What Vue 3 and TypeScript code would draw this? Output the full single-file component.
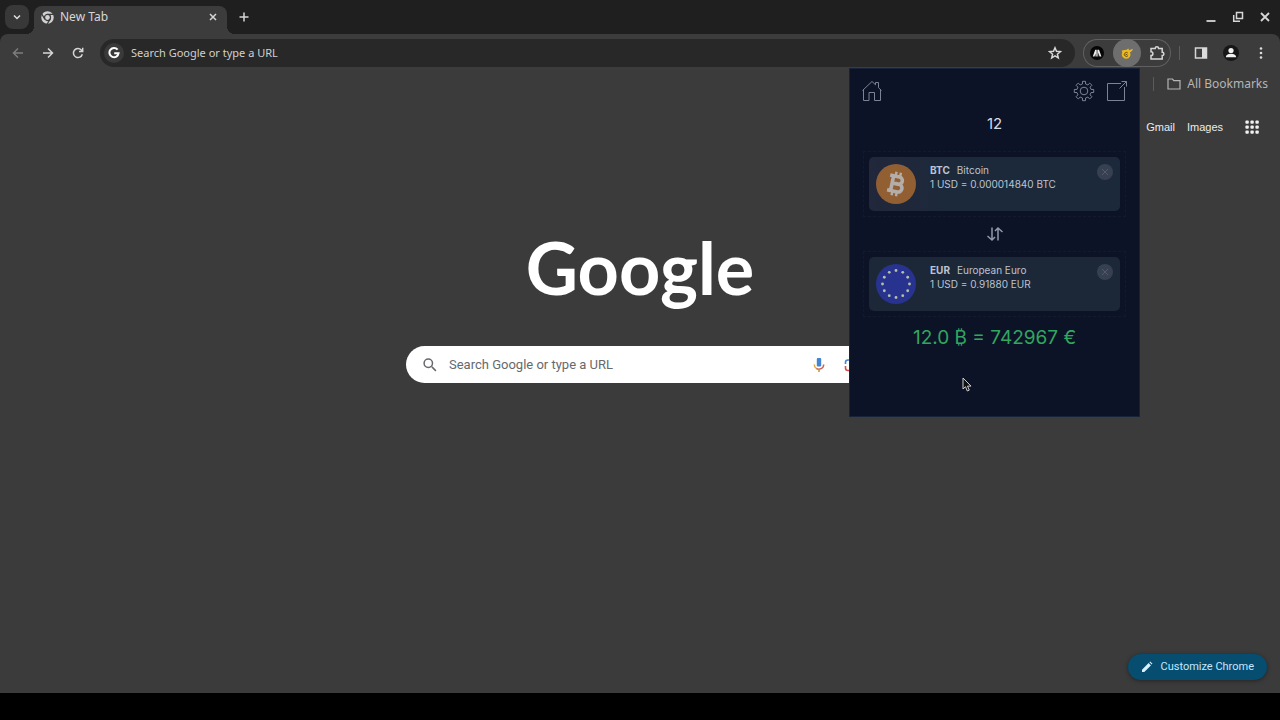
<script setup lang="ts">
import { ref } from 'vue'

interface Currency {
  code: string
  name: string
  rate: string
}

const amount = ref('12')
const address = ref('')
const query = ref('')

const source: Currency = { code: 'BTC', name: 'Bitcoin', rate: '1 USD = 0.000014840 BTC' }
const target: Currency = { code: 'EUR', name: 'European Euro', rate: '1 USD = 0.91880 EUR' }

function polar(radius: number, angle: number, centre: number): string {
  return `${(centre + radius * Math.cos(angle)).toFixed(2)} ${(centre + radius * Math.sin(angle)).toFixed(2)}`
}

function gearOutline(teeth: number): string {
  const step = (Math.PI * 2) / teeth
  const points: string[] = []
  for (let i = 0; i < teeth; i++) {
    const a = i * step - Math.PI / 2
    points.push(polar(7.2, a - step * 0.28, 11), polar(9.8, a - step * 0.2, 11))
    points.push(polar(9.8, a + step * 0.2, 11), polar(7.2, a + step * 0.28, 11))
  }
  return `M${points.join('L')}Z`
}

const gear = gearOutline(8)
const stars = Array.from({ length: 12 }, (_, i) => {
  const a = (i * Math.PI) / 6
  return { x: 20 + 13.5 * Math.cos(a), y: 20 + 13.5 * Math.sin(a) }
})
const dots = [3, 8, 13]
</script>

<template>
  <div class="browser">
    <header class="tabstrip">
      <button class="tab-search" aria-label="Search tabs">
        <svg width="10" height="10" viewBox="0 0 10 10"><path d="M2 3.5l3 3 3-3" class="line bold" /></svg>
      </button>
      <div class="tab">
        <svg width="13" height="13" viewBox="0 0 24 24">
          <circle cx="12" cy="12" r="11.5" fill="#d2d2d2" />
          <circle cx="12" cy="12" r="5.6" fill="none" stroke="#3c3c3c" stroke-width="2.4" />
          <path d="M12 6.2h11M7 15L1.6 5.8M17 15l-5.6 9" stroke="#3c3c3c" stroke-width="2.2" />
        </svg>
        <span class="tab-title">New Tab</span>
        <button class="plain close-tab" aria-label="Close tab">
          <svg width="8" height="8" viewBox="0 0 8 8"><path d="M1 1l6 6M7 1L1 7" class="line bold" /></svg>
        </button>
      </div>
      <button class="plain new-tab" aria-label="New tab">
        <svg width="10" height="10" viewBox="0 0 10 10"><path d="M5 0.5v9M0.5 5h9" class="line bold" /></svg>
      </button>
      <div class="window-controls">
        <button class="plain" aria-label="Minimize">
          <svg width="12" height="12" viewBox="0 0 12 12"><path d="M1.5 10h9" class="line heavy" /></svg>
        </button>
        <button class="plain" aria-label="Restore">
          <svg width="12" height="12" viewBox="0 0 12 12"><path d="M4.5 1.5h6v6h-6zM1.7 4v6.3H8" class="line bold" /></svg>
        </button>
        <button class="plain" aria-label="Close window">
          <svg width="12" height="12" viewBox="0 0 12 12"><path d="M2 2l8 8M10 2l-8 8" class="line heavy" /></svg>
        </button>
      </div>
    </header>

    <nav class="toolbar">
      <div class="nav-buttons">
        <button class="plain dim" aria-label="Back">
          <svg width="12" height="12" viewBox="0 0 12 12"><path d="M11 6H1.5M6 1.5L1.5 6 6 10.5" class="line bold" /></svg>
        </button>
        <button class="plain" aria-label="Forward">
          <svg width="12" height="12" viewBox="0 0 12 12"><path d="M1 6h9.500M6 1.5L10.500 6 6 10.5" class="line bold" /></svg>
        </button>
        <button class="plain" aria-label="Reload">
          <svg width="12" height="12" viewBox="0 0 12 12"><path d="M10.300 7.200A4.500 4.500 0 1 1 9.300 3L10.600 4.400M10.700 0.800v3.800H7" class="line bold" /></svg>
        </button>
      </div>
      <div class="omnibox">
        <span class="engine">
          <svg width="12" height="12" viewBox="0 0 12 12"><path d="M9.600 2.700A4.600 4.600 0 1 0 10.600 6.200H6.200" fill="none" stroke="#fff" stroke-width="2" /></svg>
        </span>
        <input v-model="address" aria-label="Address and search bar" placeholder="Search Google or type a URL" />
        <button class="plain" aria-label="Bookmark this tab">
          <svg width="14" height="14" viewBox="0 0 14 14"><path d="M7 1.800l1.500 3.500 3.800.4-2.900 2.500.9 3.700L7 9.900l-3.300 2 .9-3.700-2.900-2.500 3.800-.4z" class="line bold" /></svg>
        </button>
      </div>
      <div class="extensions">
        <button class="plain" aria-label="Dark extension">
          <svg width="14" height="14" viewBox="0 0 14 14">
            <circle cx="7" cy="7" r="7" fill="#050505" />
            <path d="M2.800 10.500L5.200 3.800h1.500v6.700H5.500V7.600l-1 2.900zM7.400 3.800H9l2.400 6.700H9.600L8.200 6.500v4h-.8z" fill="#eee" />
          </svg>
        </button>
        <button class="plain active" aria-label="Currency converter">
          <svg width="14" height="14" viewBox="0 0 14 14">
            <path d="M1.800 4.500l4.600-.8 2.100-1.200.5 1.700L13 2.800l-1 2.300-2.100 1.300a4.300 4.300 0 1 1-7.600.2z" fill="#ecb91f" />
            <path d="M7.800 7a2 2 0 1 0 .3 2.500M5.700 8.500h1.500" fill="none" stroke="#6b4d10" stroke-width="1" />
          </svg>
        </button>
        <button class="plain" aria-label="Extensions">
          <svg width="16" height="16" viewBox="0 0 16 16"><path d="M2 3.500h4.200a1.700 1.700 0 0 1 3.400 0h3.600v3.700a1.700 1.700 0 0 1 0 3.400v3.400H2v-3.400a1.900 1.900 0 0 0 0-3.800z" class="line bold" /></svg>
        </button>
      </div>
      <span class="divider"></span>
      <div class="nav-buttons">
        <button class="plain" aria-label="Side panel">
          <svg width="14" height="14" viewBox="0 0 14 14">
            <rect x="1.500" y="2" width="11" height="10" class="line bold" />
            <path d="M8 2h4.500v10H8z" fill="#dcdcdc" />
          </svg>
        </button>
        <button class="plain" aria-label="Profile">
          <svg width="16" height="16" viewBox="0 0 16 16">
            <circle cx="8" cy="8" r="8" fill="#171717" />
            <circle cx="8" cy="5.500" r="2.600" fill="#f2f2f2" />
            <path d="M2.800 12.300c0-2.300 2-3.500 5.200-3.500s5.200 1.200 5.200 3.500z" fill="#f2f2f2" />
          </svg>
        </button>
        <button class="plain" aria-label="Menu">
          <svg width="14" height="14" viewBox="0 0 14 14" fill="#dcdcdc">
            <circle cx="7" cy="2.500" r="1.300" /><circle cx="7" cy="7" r="1.300" /><circle cx="7" cy="11.500" r="1.300" />
          </svg>
        </button>
      </div>
    </nav>

    <main class="page">
      <div class="bookmarks">
        <span class="bookmark-divider"></span>
        <button class="plain bookmark-folder">
          <svg width="14" height="12" viewBox="0 0 14 12"><path d="M1 1h4.500l1.300 1.600H13V11H1z" class="line" /></svg>
          All Bookmarks
        </button>
      </div>
      <div class="account">
        <a href="#gmail">Gmail</a>
        <a href="#images">Images</a>
        <button class="plain" aria-label="Google apps">
          <svg width="16" height="16" viewBox="0 0 16 16" fill="#f1f1f1">
            <template v-for="y in dots" :key="y">
              <rect v-for="x in dots" :key="x" :x="x - 1.600" :y="y - 1.600" width="3.400" height="3.400" rx="1" />
            </template>
          </svg>
        </button>
      </div>

      <h1 class="wordmark">Google</h1>

      <form class="search" @submit.prevent>
        <svg width="14" height="14" viewBox="0 0 14 14"><path d="M8.900 8.900l4 4M9.500 5.300a4.200 4.200 0 1 1-8.400 0 4.200 4.200 0 0 1 8.400 0z" fill="none" stroke="#66696d" stroke-width="1.500" /></svg>
        <input v-model="query" aria-label="Search" placeholder="Search Google or type a URL" />
        <button type="button" class="plain" aria-label="Search by voice">
          <svg width="12" height="16" viewBox="0 0 12 16">
            <rect x="3.800" y="1" width="4.400" height="8.500" rx="1" fill="#4285d4" />
            <path d="M1.300 7.500c0 2.200 1 3.500 2.300 4.200" fill="none" stroke="#e0a83c" stroke-width="1.500" />
            <path d="M3.400 11.500c2.600 1.500 7.300.3 7.300-4" fill="none" stroke="#d2604f" stroke-width="1.500" />
            <path d="M6 12v3" stroke="#b9a23f" stroke-width="1.600" />
          </svg>
        </button>
        <button type="button" class="plain" aria-label="Search by image">
          <svg width="14" height="14" viewBox="0 0 14 14" fill="none" stroke-width="1.600">
            <path d="M1.500 6V4.500a2.500 2.500 0 0 1 2.500-2.500h2" stroke="#4285d4" />
            <path d="M1.500 8v2a2.500 2.500 0 0 0 2.500 2.500h2" stroke="#d2504f" />
            <path d="M8 2h2a2.500 2.500 0 0 1 2.500 2.500V6" stroke="#34a853" />
            <circle cx="7.500" cy="7.300" r="2" fill="#4285f4" stroke="none" />
          </svg>
        </button>
      </form>

      <button class="customize">
        <svg width="12" height="12" viewBox="0 0 12 12" fill="#d8efff"><path d="M1 8.700L7.600 2.100l2.300 2.300L3.300 11H1zM8.400 1.300l.8-.8 2.300 2.300-.8.8z" /></svg>
        Customize Chrome
      </button>
    </main>

    <footer class="desktop"></footer>

    <section class="popup" aria-label="Currency converter">
      <div class="popup-bar">
        <button class="plain" aria-label="Home">
          <svg width="22" height="22" viewBox="0 0 22 22" class="thin">
            <path d="M1.500 10.500L11 1.500l3.500 3.300V2.500h3v5.200l3 2.800M2.500 9.500v11h5.500v-8h5.500v8h6v-11" />
          </svg>
        </button>
        <span class="grow"></span>
        <button class="plain" aria-label="Settings">
          <svg width="22" height="22" viewBox="0 0 22 22" class="thin"><path :d="gear" /><circle cx="11" cy="11" r="3.800" /></svg>
        </button>
        <button class="plain" aria-label="Open in window">
          <svg width="22" height="22" viewBox="0 0 22 22" class="thin"><path d="M15 3.500H1.500v17h17V7M13.500 8.500l7-7M15.500 1.500h5v5" /></svg>
        </button>
      </div>
      <input v-model="amount" class="amount" aria-label="Amount" />
      <div class="slot">
        <article class="card from">
          <svg class="coin" width="40" height="40" viewBox="0 0 40 40">
            <circle cx="20" cy="20" r="20" fill="#925f33" />
            <g transform="rotate(12 20 20)" fill="none" stroke="#b3aeaa" stroke-width="3.600">
              <path d="M12.500 12.500H22a3.600 3.600 0 0 1 0 7.200h-6M16 12.500v15M12.500 27.500h10.400a3.900 3.900 0 0 0 0-7.800H20" />
              <path d="M18 8v4M22.500 8v4M18 28v4M22.500 28v4" stroke-width="2.400" />
            </g>
          </svg>
          <div class="details">
            <p><b>{{ source.code }}</b><span>{{ source.name }}</span></p>
            <p>{{ source.rate }}</p>
          </div>
          <button class="remove" aria-label="Remove Bitcoin">
            <svg width="8" height="8" viewBox="0 0 8 8"><path d="M1 1l6 6M7 1L1 7" /></svg>
          </button>
        </article>
      </div>
      <button class="plain swap" aria-label="Swap currencies">
        <svg width="18" height="16" viewBox="0 0 18 16"><path d="M6 1.500v12M1.500 10L6 14l3-3M12 14.500v-12M9 5l3-3 4.500 4" /></svg>
      </button>
      <div class="slot">
        <article class="card to">
          <svg class="coin" width="40" height="40" viewBox="0 0 40 40">
            <circle cx="20" cy="20" r="20" fill="#28338f" />
            <circle v-for="(s, i) in stars" :key="i" :cx="s.x" :cy="s.y" r="1.400" fill="#b9bfa6" />
          </svg>
          <div class="details">
            <p><b>{{ target.code }}</b><span>{{ target.name }}</span></p>
            <p>{{ target.rate }}</p>
          </div>
          <button class="remove" aria-label="Remove European Euro">
            <svg width="8" height="8" viewBox="0 0 8 8"><path d="M1 1l6 6M7 1L1 7" /></svg>
          </button>
        </article>
      </div>
      <output class="result">12.0 ₿ = 742967 €</output>
      <svg class="pointer" width="10" height="15" viewBox="0 0 10 15"><path d="M1 1v11l2.500-2.300L5.300 14l2-.9-1.800-4H9z" fill="#111" stroke="#d0d0d0" /></svg>
    </section>
  </div>
</template>

<style>
body {
  background: #000;
}
</style>

<style scoped>
.browser {
  position: relative;
  display: flex;
  flex-direction: column;
  min-height: 100vh;
  background: #1f1f1f;
  color: #d6d6d6;
  font: 12px/16px "Noto Sans", "Open Sans", sans-serif;
}
svg {
  display: block;
  flex: none;
}
.line {
  fill: none;
  stroke: currentColor;
  stroke-width: 1.2;
}
.bold {
  stroke-width: 1.5;
}
.heavy {
  stroke-width: 1.8;
}
.plain {
  display: flex;
  align-items: center;
  justify-content: center;
  padding: 0;
  border: 0;
  background: none;
  color: inherit;
  font: inherit;
}
input {
  min-width: 0;
  padding: 0;
  border: 0;
  outline: 0;
  background: none;
  color: inherit;
  font: inherit;
}
.tabstrip {
  display: flex;
  align-items: center;
  height: 34px;
}
.tab-search {
  display: flex;
  align-items: center;
  justify-content: center;
  width: 24px;
  height: 24px;
  margin: 0 5px;
  padding: 0;
  border: 0;
  border-radius: 8px;
  background: #383838;
  color: #dedede;
}
.tab {
  position: relative;
  display: flex;
  align-items: center;
  gap: 6px;
  box-sizing: border-box;
  width: 193px;
  height: 28px;
  margin-top: 6px;
  padding: 0 6px 6px 7px;
  border-radius: 8px 8px 0 0;
  background: #3c3c3c;
}
.tab::before,
.tab::after {
  content: "";
  position: absolute;
  bottom: 0;
  width: 8px;
  height: 8px;
}
.tab::before {
  right: 100%;
  background: radial-gradient(circle at 0 0, transparent 8px, #3c3c3c 8px);
}
.tab::after {
  left: 100%;
  background: radial-gradient(circle at 100% 0, transparent 8px, #3c3c3c 8px);
}
.tab-title {
  flex: 1;
}
.close-tab {
  width: 16px;
  height: 16px;
}
.new-tab {
  width: 24px;
  height: 24px;
  margin-left: 5px;
}
.window-controls {
  display: flex;
  gap: 3px;
  margin: 0 3px 0 auto;
}
.window-controls button {
  width: 24px;
  height: 24px;
}
.toolbar {
  display: flex;
  align-items: center;
  height: 34px;
  padding: 2px 6px 0 5px;
  border-radius: 8px 8px 0 0;
  background: #3c3c3c;
}
.nav-buttons {
  display: flex;
  gap: 4px;
}
.nav-buttons button {
  width: 26px;
  height: 26px;
}
.nav-buttons .dim {
  color: #7d7d7d;
}
.omnibox {
  display: flex;
  flex: 1;
  align-items: center;
  height: 28px;
  margin: 0 8px 0 9px;
  padding: 0 13px 0 4px;
  border-radius: 14px;
  background: #282828;
}
.omnibox input {
  flex: 1;
  font-size: 11px;
}
.omnibox input::placeholder {
  color: #d0d0d0;
  opacity: 1;
}
.engine {
  display: flex;
  align-items: center;
  justify-content: center;
  width: 20px;
  height: 20px;
  margin-right: 7px;
  border-radius: 10px;
  background: #3a3a3a;
}
.extensions {
  display: flex;
  gap: 2px;
  border-radius: 14px;
  box-shadow: inset 0 0 0 1px #606060;
}
.extensions button {
  width: 28px;
  height: 28px;
}
.extensions .active {
  border-radius: 14px;
  background: #6e6e6e;
}
.divider {
  width: 1px;
  height: 14px;
  margin: 0 8px;
  background: #5c5c5c;
}
.page {
  display: flex;
  flex: 1;
  flex-direction: column;
  align-items: center;
  background: #3b3b3b;
}
.bookmarks,
.account {
  display: flex;
  align-items: center;
  align-self: flex-end;
}
.bookmarks {
  margin: 3px 12px 0 0;
  color: #b5b5b5;
}
.bookmark-divider {
  width: 1px;
  height: 14px;
  margin-right: 13px;
  background: #5c5c5c;
}
.bookmark-folder {
  gap: 6px;
  height: 22px;
}
.account {
  gap: 12px;
  margin: 20px 20px 0 0;
  font: 11px/24px "Liberation Sans", Arial, sans-serif;
}
.account a {
  color: #ececec;
  text-decoration: none;
}
.account button {
  margin-left: 9px;
}
.wordmark {
  margin: 82px 0 0;
  color: #fff;
  font: 700 72px/92px Lato, sans-serif;
}
.search {
  display: flex;
  align-items: center;
  box-sizing: border-box;
  width: 468px;
  max-width: 100%;
  height: 37px;
  margin-top: 33px;
  padding: 0 16px 0 17px;
  border-radius: 19px;
  background: #fff;
  color: #5f6368;
}
.search input {
  flex: 1;
  margin-left: 12px;
  font: 13px/20px Roboto, sans-serif;
}
.search input::placeholder {
  color: #66696d;
  opacity: 1;
}
.search button {
  margin-left: 19px;
}
.customize {
  display: flex;
  align-items: center;
  gap: 7px;
  align-self: flex-end;
  height: 26px;
  margin: auto 13px 13px 0;
  padding: 0 13px;
  border: 0;
  border-radius: 13px;
  background: #064d70;
  box-shadow: 0 1px 4px #0006;
  color: #c2e7ff;
  font: 11px/16px Roboto, sans-serif;
}
.desktop {
  height: 27px;
  background: #000;
}
.popup {
  position: absolute;
  top: 68px;
  right: 140px;
  display: flex;
  flex-direction: column;
  box-sizing: border-box;
  width: 291px;
  min-height: 349px;
  padding: 12px 13px;
  border: 1px solid #172338;
  background: #0d1326;
  color: #bcc3d2;
  font: 11px/14px Inter, Roboto, sans-serif;
}
.popup-bar {
  display: flex;
  gap: 11px;
  margin: -1px -2px 0;
}
.grow {
  flex: 1;
}
.thin {
  fill: none;
  stroke: #7c8395;
  stroke-width: 1;
}
.amount {
  height: 20px;
  margin: 11px 0 18px;
  color: #d5dae6;
  font-size: 15px;
  text-align: center;
}
.slot {
  padding: 5px;
  border: 1px dashed #131a2e;
}
.card {
  display: flex;
  align-items: flex-start;
  box-sizing: border-box;
  height: 54px;
  padding: 7px;
  border-radius: 5px;
  background: #1c2738;
}
.from {
  background: linear-gradient(90deg, #22273a, #1c293a 30%);
}
.coin {
  margin-right: 14px;
}
.details {
  flex: 1;
  margin-top: -1px;
}
.details p {
  margin: 0;
  font-size: 10px;
  white-space: nowrap;
}
.details b {
  margin-right: 7px;
}
.remove {
  display: flex;
  align-items: center;
  justify-content: center;
  width: 16px;
  height: 16px;
  padding: 0;
  border: 0;
  border-radius: 8px;
  background: #364051;
}
.remove path {
  stroke: #515b6c;
}
.swap {
  align-self: center;
  margin: 9px 0;
}
.swap path {
  fill: none;
  stroke: #9199aa;
  stroke-width: 1.5;
}
.result {
  margin-top: 9px;
  color: #32a660;
  font-size: 19px;
  line-height: 24px;
  text-align: center;
}
.pointer {
  position: absolute;
  top: 308px;
  left: 112px;
}
</style>
